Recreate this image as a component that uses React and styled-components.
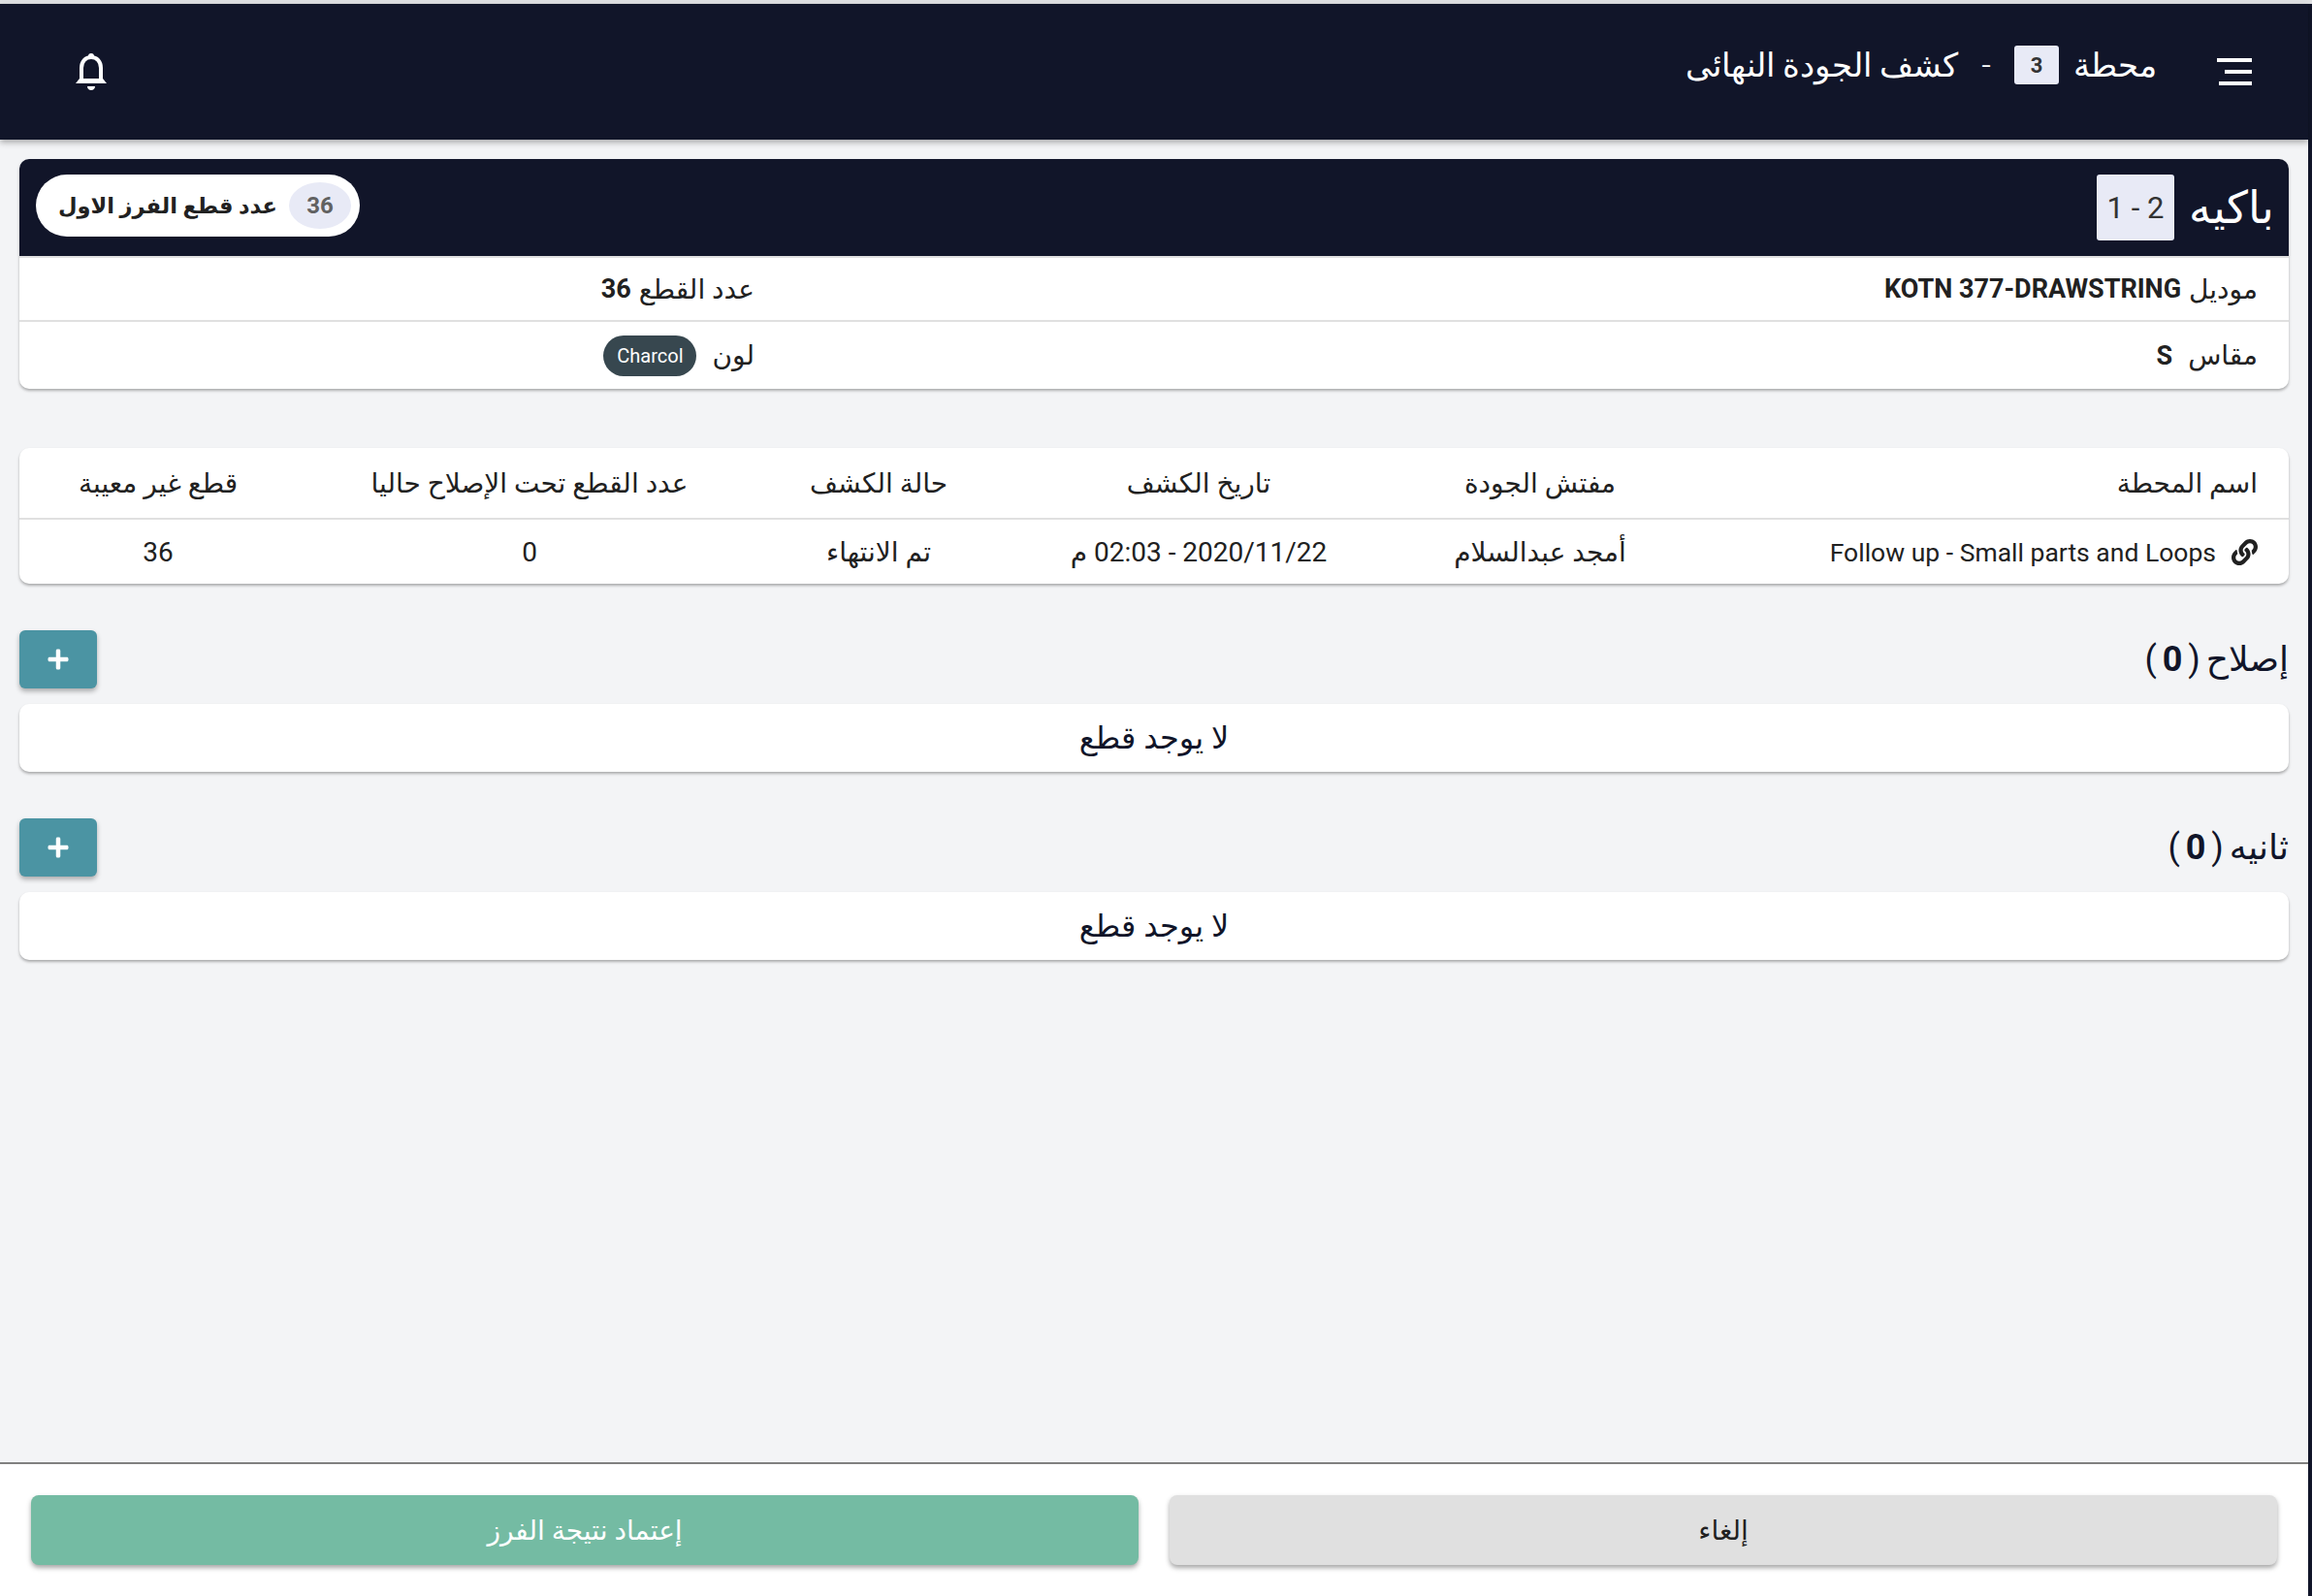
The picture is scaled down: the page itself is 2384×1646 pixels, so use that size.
import React from "react";
import styled, { createGlobalStyle } from "styled-components";
import { FaLink, FaPlus } from "react-icons/fa";

const GlobalStyle = createGlobalStyle`
  html, body {
    margin: 0;
    padding: 0;
    background: #111529;
  }
  * { box-sizing: border-box; }
`;

const NAVY = "#111529";
const FONT = `"Roboto", "DejaVu Sans", sans-serif`;

const TopStrip = styled.div`
  height: 4px;
  background: #dfe0e2;
`;

const Page = styled.div`
  direction: rtl;
  width: 2380px;
  height: 1642px;
  display: flex;
  flex-direction: column;
  background: #f3f4f6;
  font-family: ${FONT};
  color: #212121;
`;

const Header = styled.header`
  height: 140px;
  flex: none;
  display: flex;
  align-items: flex-start;
  justify-content: space-between;
  background: ${NAVY};
  color: #fff;
  box-shadow: 0 3px 6px rgba(0, 0, 0, 0.3);
  position: relative;
`;

const HeaderStart = styled.div`
  display: flex;
  align-items: center;
  height: 126px;
  margin-right: 58px;
`;

const Burger = styled.div`
  width: 36px;
  display: flex;
  flex-direction: column;
  gap: 8px;
  margin-left: 62px;
  margin-top: 14px;
`;

const BurgerBar = styled.span`
  display: block;
  height: 4px;
  width: ${(p) => p.$w}px;
  background: #fff;
`;

const HeaderTitle = styled.div`
  display: flex;
  align-items: center;
  font-size: 34px;
  font-weight: 300;
  gap: 24px;
`;

const StationNo = styled.span`
  width: 46px;
  height: 40px;
  margin-right: -9px;
  display: flex;
  align-items: center;
  justify-content: center;
  border-radius: 3px;
  background: #e8eaf6;
  color: #333;
  font-size: 22px;
  font-weight: 700;
`;

const BellWrap = styled.div`
  margin: 51px 0 0 78px;
  width: 32px;
  line-height: 0;
`;

const Main = styled.main`
  flex: 1;
  padding: 20px 20px 0;
  display: flex;
  flex-direction: column;
`;

const Card = styled.section`
  width: 2340px;
  background: #fff;
  border-radius: 10px;
  box-shadow: 0 2px 3px rgba(0, 0, 0, 0.3);
`;

const BatchHead = styled.div`
  height: 100px;
  display: flex;
  align-items: center;
  justify-content: space-between;
  padding: 0 15px 0 17px;
  background: ${NAVY};
  border-radius: 10px 10px 0 0;
  color: #fff;
`;

const BatchTitle = styled.div`
  display: flex;
  align-items: center;
  gap: 15px;
  font-size: 46px;
  font-weight: 300;
`;

const BatchNo = styled.span`
  width: 80px;
  height: 68px;
  display: flex;
  align-items: center;
  justify-content: center;
  background: #e8eaf6;
  border-radius: 3px;
  color: #333;
  font-size: 31px;
  font-weight: 400;
`;

const CountPill = styled.div`
  width: 334px;
  height: 64px;
  display: flex;
  align-items: center;
  gap: 12px;
  padding: 0 9px;
  margin-bottom: 4px;
  border-radius: 32px;
  background: #fff;
  color: #212121;
  font-size: 22.5px;
  font-weight: 700;
  white-space: nowrap;
`;

const CountCircle = styled.span`
  width: 64px;
  height: 48px;
  flex: none;
  display: flex;
  align-items: center;
  justify-content: center;
  border-radius: 50%;
  background: #e8eaf6;
  color: #616161;
  font-size: 24px;
  font-weight: 700;
`;

const InfoRow = styled.div`
  height: ${(p) => p.$h}px;
  display: grid;
  grid-template-columns: 1550px 790px;
  align-items: center;
  border-top: 2px solid #e0e0e0;
  font-size: 28px;
  font-weight: 400;
`;

const InfoCell = styled.div`
  display: flex;
  align-items: center;
  gap: ${(p) => p.$gap || 8}px;
  padding-right: 32px;
`;

const Strong = styled.b`
  font-size: ${(p) => p.$size || 27}px;
  font-weight: 700;
`;

const ColorChip = styled.span`
  height: 42px;
  width: 96px;
  display: flex;
  align-items: center;
  justify-content: center;
  border-radius: 21px;
  background: #37474f;
  color: #fff;
  font-size: 20px;
  font-weight: 400;
`;

const TableCard = styled(Card)`
  margin-top: 61px;
`;

const TableRow = styled.div`
  display: grid;
  grid-template-columns: 630px 284px 420px 240px 480px 286px;
  align-items: center;
  height: ${(p) => p.$h}px;
  border-top: ${(p) => (p.$line ? "2px solid #e0e0e0" : "none")};
  font-size: 28px;
  font-weight: 400;
`;

const TableCell = styled.div`
  text-align: center;
  white-space: nowrap;
`;

const StationCell = styled(TableCell)`
  display: flex;
  align-items: center;
  gap: 16px;
  padding-right: 32px;
  text-align: right;
`;

const StationName = styled.span`
  font-size: 26.5px;
`;

const SectionHead = styled.div`
  display: flex;
  align-items: center;
  justify-content: space-between;
  height: 60px;
  margin-top: ${(p) => p.$top}px;
  margin-bottom: 16px;
  width: 2340px;
`;

const SectionTitle = styled.h2`
  margin: 0;
  font-size: 36px;
  font-weight: 400;
  word-spacing: -3px;
  color: ${NAVY};
`;

const AddButton = styled.button`
  width: 80px;
  height: 60px;
  border: none;
  border-radius: 6px;
  background: #4b94a3;
  color: #fff;
  display: flex;
  align-items: center;
  justify-content: center;
  box-shadow: 0 3px 5px rgba(0, 0, 0, 0.3);
`;

const EmptyCard = styled(Card)`
  height: 70px;
  display: flex;
  align-items: center;
  justify-content: center;
  font-size: 32px;
  font-weight: 400;
  color: ${NAVY};
`;

const Footer = styled.footer`
  height: 138px;
  flex: none;
  display: flex;
  gap: 32px;
  padding: 32px 32px 0;
  background: #fff;
  border-top: 2px solid #808080;
`;

const ActionButton = styled.button`
  flex: 1;
  height: 72px;
  border: none;
  border-radius: 8px;
  font-family: ${FONT};
  font-size: 28px;
  font-weight: 400;
  background: ${(p) => (p.$primary ? "#74bba3" : "#e0e0e0")};
  color: ${(p) => (p.$primary ? "#fff" : "#212121")};
  box-shadow: 0 3px 5px rgba(0, 0, 0, 0.35);
`;

const Bell = () => (
  <svg width="32" height="38" viewBox="0 0 32 38" fill="none">
    <circle cx="16" cy="3" r="3" fill="#fff" />
    <path
      d="M6 29V15C6 8.5 10 4 16 4s10 4.500 10 11v14"
      stroke="#fff"
      strokeWidth="4"
    />
    <path d="M0 31 4 26h24l4 5z" fill="#fff" />
    <path d="M12 34h8c0 2.500-1.800 4-4 4s-4-1.500-4-4z" fill="#fff" />
  </svg>
);

const Section = ({ title, top }) => (
  <>
    <SectionHead $top={top}>
      <SectionTitle>
        {title} ( <Strong $size={36}>0</Strong> )
      </SectionTitle>
      <AddButton>
        <FaPlus size={24} />
      </AddButton>
    </SectionHead>
    <EmptyCard>لا يوجد قطع</EmptyCard>
  </>
);

export default function App() {
  return (
    <>
      <GlobalStyle />
      <TopStrip />
      <Page>
        <Header>
          <HeaderStart>
            <Burger>
              <BurgerBar $w={36} />
              <BurgerBar $w={28} />
              <BurgerBar $w={34} />
            </Burger>
            <HeaderTitle>
              <span>محطة</span>
              <StationNo>3</StationNo>
              <span>-</span>
              <span>كشف الجودة النهائى</span>
            </HeaderTitle>
          </HeaderStart>
          <BellWrap>
            <Bell />
          </BellWrap>
        </Header>
        <Main>
          <Card>
            <BatchHead>
              <BatchTitle>
                <span>باكيه</span>
                <BatchNo>2 - 1</BatchNo>
              </BatchTitle>
              <CountPill>
                <CountCircle>36</CountCircle>
                <span>عدد قطع الفرز الاول</span>
              </CountPill>
            </BatchHead>
            <InfoRow $h={66}>
              <InfoCell>
                موديل <Strong>KOTN 377-DRAWSTRING</Strong>
              </InfoCell>
              <InfoCell>
                عدد القطع <Strong>36</Strong>
              </InfoCell>
            </InfoRow>
            <InfoRow $h={71}>
              <InfoCell $gap={16}>
                مقاس <Strong>S</Strong>
              </InfoCell>
              <InfoCell $gap={16}>
                لون <ColorChip>Charcol</ColorChip>
              </InfoCell>
            </InfoRow>
          </Card>

          <TableCard>
            <TableRow $h={72}>
              <StationCell>اسم المحطة</StationCell>
              <TableCell>مفتش الجودة</TableCell>
              <TableCell>تاريخ الكشف</TableCell>
              <TableCell>حالة الكشف</TableCell>
              <TableCell>عدد القطع تحت الإصلاح حاليا</TableCell>
              <TableCell>قطع غير معيبة</TableCell>
            </TableRow>
            <TableRow $h={68} $line>
              <StationCell>
                <FaLink size={27} />
                <StationName>Follow up - Small parts and Loops</StationName>
              </StationCell>
              <TableCell>أمجد عبدالسلام</TableCell>
              <TableCell>2020/11/22 - 02:03 م</TableCell>
              <TableCell>تم الانتهاء</TableCell>
              <TableCell>0</TableCell>
              <TableCell>36</TableCell>
            </TableRow>
          </TableCard>

          <Section title="إصلاح" top={48} />
          <Section title="ثانيه" top={48} />
        </Main>
        <Footer>
          <ActionButton>إلغاء</ActionButton>
          <ActionButton $primary>إعتماد نتيجة الفرز</ActionButton>
        </Footer>
      </Page>
    </>
  );
}
